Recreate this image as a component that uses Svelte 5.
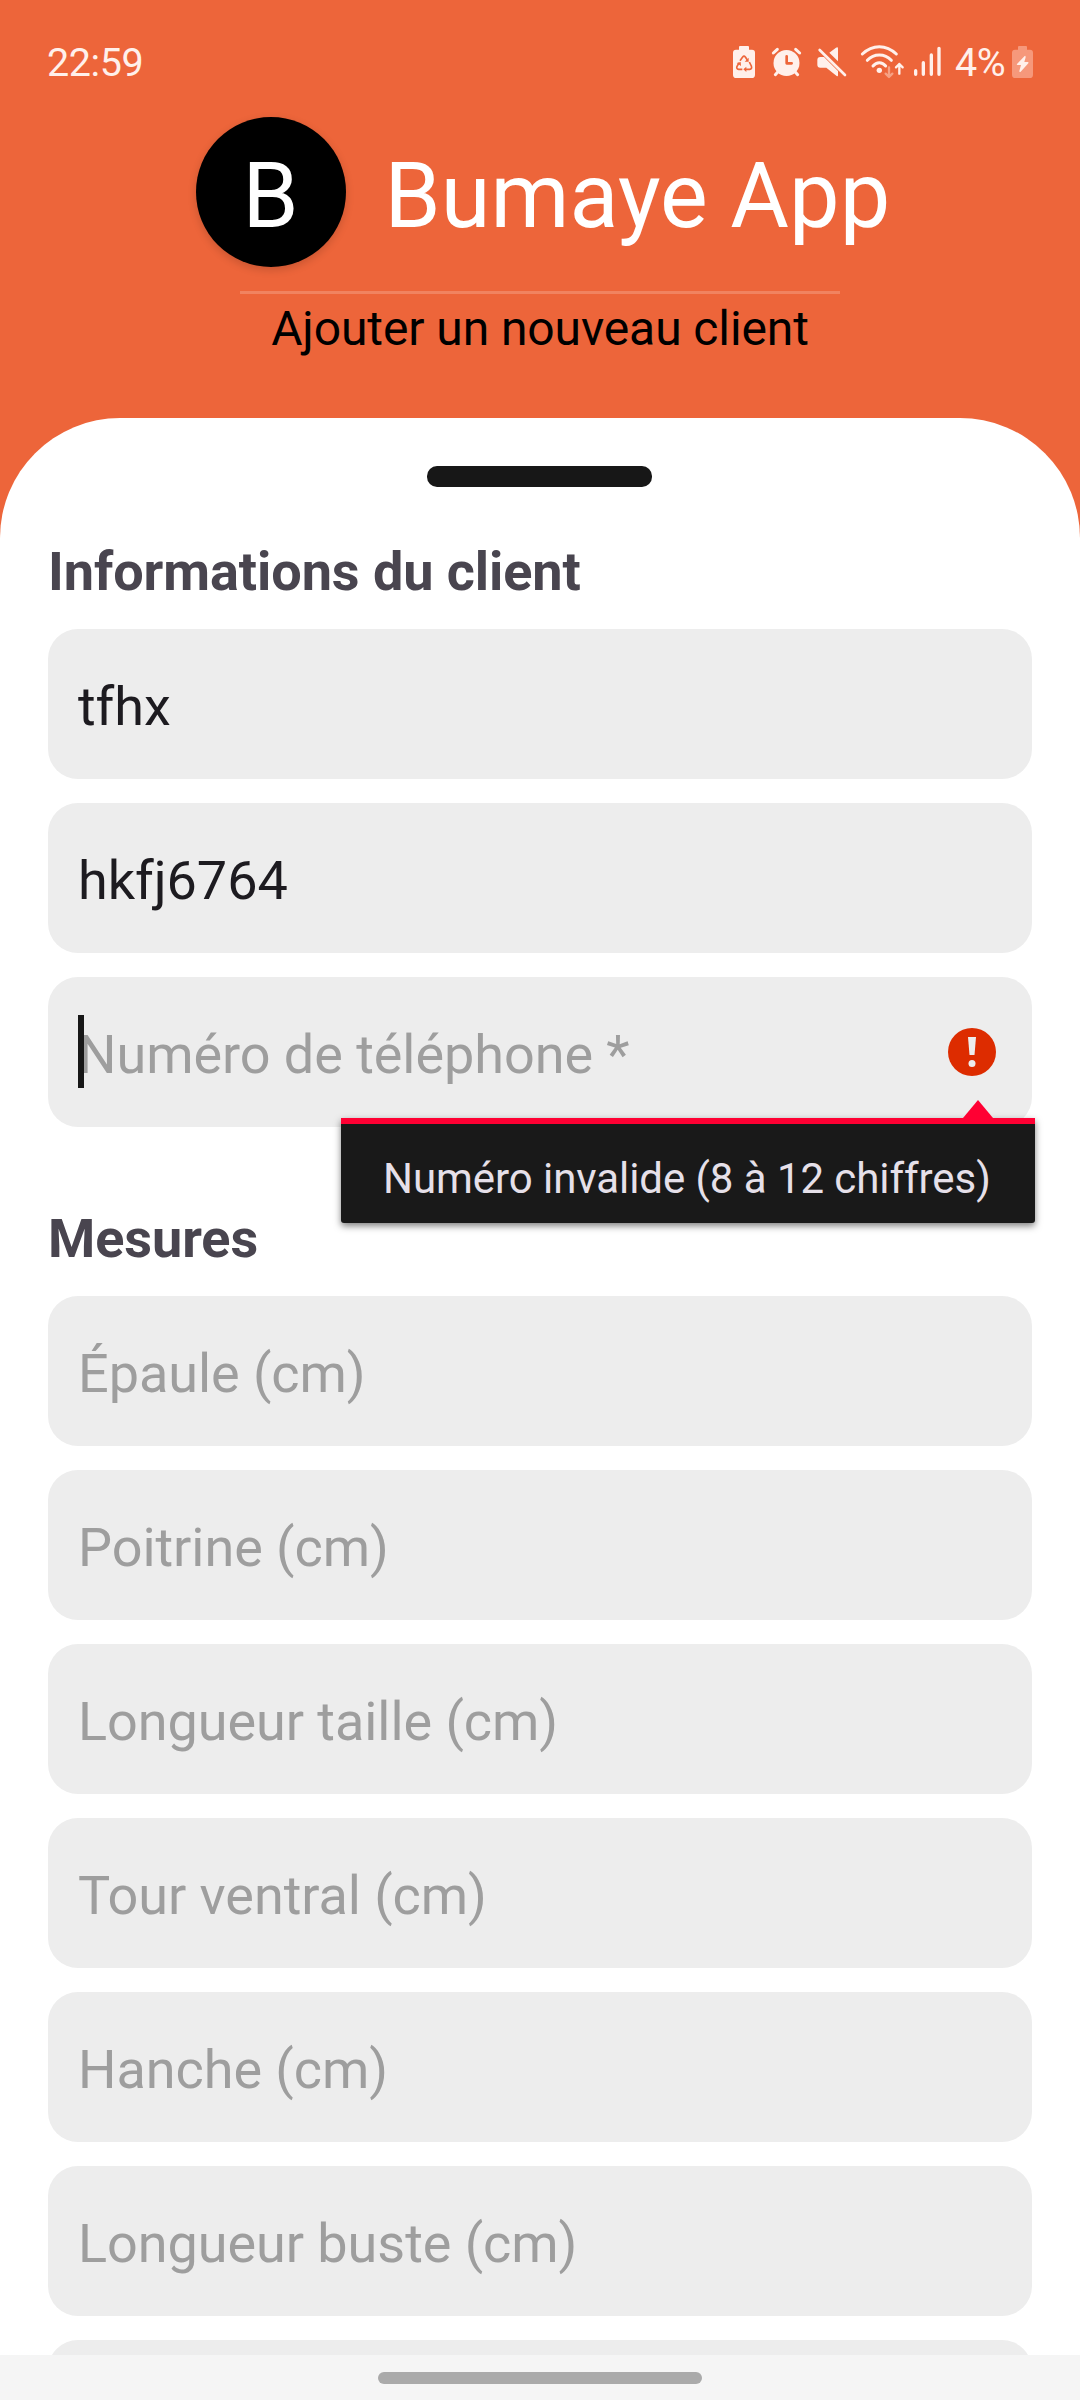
<script>
  const client = [
    { label: 'Nom', value: 'tfhx' },
    { label: 'Adresse', value: 'hkfj6764' },
    { label: 'Numéro de téléphone *', value: '', focused: true, error: 'Numéro invalide (8 à 12 chiffres)' }
  ];
  const measures = [
    'Épaule (cm)',
    'Poitrine (cm)',
    'Longueur taille (cm)',
    'Tour ventral (cm)',
    'Hanche (cm)',
    'Longueur buste (cm)',
    ''
  ];
</script>

<div class="screen">
  <div class="status">
    <span class="time">22:59</span>
    <div class="indicators">
      <svg class="saver" width="24" height="34" viewBox="96 75 72 102">
        <path fill="currentColor" d="M120 78h24q3 0 3 3v8h9q9 0 9 9v66q0 10-10 10h-46q-10 0-10-10V98q0-9 9-9h9v-8q0-3 3-3z" />
        <g fill="none" stroke="#ed653a" stroke-width="5" stroke-linejoin="round">
          <path d="M120 122l8-11q4-5 8 0l6 9" />
          <path d="M148 126l6 12q3 9-5 10h-13" />
          <path d="M127 148h-11q-8-1-5-9l6-10" />
        </g>
        <path fill="#ed653a" d="M146 113v12h-12zM139 140v16l-9-8zM110 129l12-3 1 12z" />
      </svg>
      <svg class="alarm" width="31" height="34" viewBox="213 75 93 102">
        <circle cx="259.500" cy="129" r="39" fill="currentColor" />
        <g fill="none" stroke="currentColor" stroke-width="9" stroke-linecap="round">
          <path d="M220 99l12-11M299 99l-12-11M226 164l8-9M293 164l-8-9" />
        </g>
        <path fill="none" stroke="#ed653a" stroke-width="8" stroke-linecap="round" stroke-linejoin="round" d="M260 109v21h15" />
      </svg>
      <svg class="mute" width="31" height="34" viewBox="348 75 93 102">
        <path fill="currentColor" d="M361 111h11l42 42v13q0 4-4 2l-31-25h-18q-9 0-9-9v-14q0-9 9-9zM388 98l20-15q6-4 6 3v38z" />
        <path stroke="currentColor" stroke-width="8" stroke-linecap="round" d="M359 90l76 75" />
      </svg>
      <svg class="wifi" width="45" height="34" viewBox="480 75 135 102">
        <g fill="none" stroke="currentColor" stroke-width="9" stroke-linecap="round">
          <path d="M487 102q23-22 51-22t51 22" />
          <path d="M502 121q15-16 36-16t36 16" />
          <path d="M519 138q8-10 19-10t19 10" />
        </g>
        <circle cx="538" cy="151" r="8" fill="currentColor" />
        <path fill="none" stroke="currentColor" stroke-width="7" stroke-linecap="round" stroke-linejoin="round" d="M598 161v-29M588 142l10-10 10 10" />
        <path fill="none" stroke="#f6a184" stroke-width="7" stroke-linecap="round" stroke-linejoin="round" d="M567 142v29M557 161l10 10 10-10" />
      </svg>
      <svg class="signal" width="29" height="34" viewBox="639 75 87 102">
        <path fill="none" stroke="currentColor" stroke-width="10" stroke-linecap="round" d="M647 152v11M670 128v35M694 105v58M717 85v78" />
      </svg>
      <span class="percent">4%</span>
      <svg class="battery" width="23" height="34" viewBox="933 75 69 102">
        <path fill="#f6987b" d="M956 78h22q3 0 3 3v8h9q9 0 9 9v66q0 10-10 10h-43q-10 0-10-10V98q0-9 9-9h9v-8q0-3 3-3z" />
        <path fill="currentColor" d="M974 108l-23 24q-2 3 2 3h10l-5 18q0 5 4 2l23-25q2-4-2-4h-10l4-14q0-6-3-4z" />
      </svg>
    </div>
  </div>

  <header>
    <div class="brand">
      <div class="logo"><span>B</span></div>
      <h1>Bumaye App</h1>
    </div>
    <div class="rule"></div>
    <p>Ajouter un nouveau client</p>
  </header>

  <main>
    <div class="handle"></div>
    <h2>Informations du client</h2>
    <div class="fields">
      {#each client as field}
        <div class="field" class:filled={field.value}>
          {#if field.focused}<i class="caret"></i>{/if}
          <span>{field.value || field.label}</span>
          {#if field.error}
            <svg class="alert" width="48" height="48" viewBox="0 0 48 48">
              <circle cx="24" cy="24" r="24" fill="#dd2c00" />
              <path fill="#ededed" d="M20 9h8l-1.500 18h-5z" />
              <circle cx="24" cy="35.500" r="3.500" fill="#ededed" />
            </svg>
            <div class="popup">
              <svg class="arrow" width="30" height="18" viewBox="0 0 30 18"><path fill="#ff0033" d="M15 0l15 18H0z" /></svg>
              {field.error}
            </div>
          {/if}
        </div>
      {/each}
    </div>
    <h2 class="second">Mesures</h2>
    <div class="fields">
      {#each measures as label}
        <div class="field"><span>{label}</span></div>
      {/each}
    </div>
  </main>

  <nav><div class="pill"></div></nav>
</div>

<style>
  :global(body) {
    margin: 0;
  }
  .screen {
    width: 1080px;
    height: 2400px;
    display: flex;
    flex-direction: column;
    overflow: hidden;
    background: #ed653a;
    font-family: Roboto, sans-serif;
  }
  .status {
    box-sizing: border-box;
    flex: none;
    height: 117px;
    padding: 38px 46px 0 47px;
    display: flex;
    justify-content: space-between;
    align-items: flex-start;
    color: #fff0eb;
    font-size: 39.500px;
    line-height: 50px;
  }
  .time {
    letter-spacing: -0.4px;
  }
  .indicators {
    display: flex;
    align-items: flex-start;
  }
  .indicators svg {
    display: block;
    margin-top: 7px;
  }
  .alarm { margin-left: 15px; }
  .mute { margin-left: 14px; }
  .wifi { margin-left: 13px; }
  .signal { margin-left: 8px; }
  .percent {
    width: 51px;
    margin: 0 5px 0 13px;
    letter-spacing: -0.4px;
    white-space: nowrap;
  }
  header {
    flex: none;
    height: 301px;
    display: flex;
    flex-direction: column;
    align-items: center;
  }
  .brand {
    display: flex;
    align-items: center;
    gap: 39px;
    height: 150px;
    padding-left: 6px;
    color: #fff;
    font-size: 90px;
    line-height: 106px;
  }
  .logo {
    width: 150px;
    height: 150px;
    border-radius: 50%;
    background: #000;
    box-shadow: 0 3px 8px rgba(0, 0, 0, 0.16);
    text-align: center;
  }
  .logo span {
    display: block;
    padding-top: 27px;
  }
  h1 {
    margin: 0;
    padding-top: 10px;
    font: inherit;
    letter-spacing: 0.1px;
    white-space: nowrap;
  }
  .rule {
    width: 600px;
    height: 3px;
    margin-top: 24px;
    background: #f18360;
  }
  header p {
    margin: 7px 0 0;
    color: #000;
    font-size: 48px;
    letter-spacing: -0.1px;
    line-height: 56px;
  }
  main {
    flex: 1;
    min-height: 0;
    overflow: hidden;
    padding: 48px 48px 0;
    border-radius: 120px 120px 0 0;
    background: #fff;
  }
  .handle {
    width: 225px;
    height: 21px;
    margin: 0 auto 53px 379px;
    border-radius: 10px;
    background: #171717;
  }
  h2 {
    margin: 0;
    height: 89px;
    color: #49454f;
    font-size: 54px;
    font-weight: 700;
    letter-spacing: -0.07px;
    line-height: 64px;
  }
  .second {
    margin-top: 80px;
  }
  .fields {
    display: flex;
    flex-direction: column;
    gap: 24px;
  }
  .field {
    position: relative;
    box-sizing: border-box;
    flex: none;
    height: 150px;
    padding: 5px 36px 0 30px;
    display: flex;
    align-items: center;
    border-radius: 30px;
    background: #ededed;
    color: #9e9e9e;
    font-size: 54px;
    letter-spacing: -0.06px;
    line-height: 64px;
    white-space: nowrap;
  }
  .filled {
    color: #1d1b20;
  }
  .caret {
    position: absolute;
    left: 30px;
    top: 38px;
    width: 6px;
    height: 73px;
    background: #171717;
  }
  .alert {
    margin: 0 0 5px auto;
  }
  .popup {
    position: absolute;
    z-index: 1;
    right: -3px;
    top: 141px;
    box-sizing: border-box;
    width: 694px;
    height: 105px;
    padding: 30px 0 0 42px;
    border-top: 6px solid #ff0033;
    border-radius: 0 0 3px 3px;
    background: #191919;
    box-shadow: 0 3px 7px rgba(0, 0, 0, 0.5);
    color: #e6e0e9;
    font-size: 42px;
    line-height: 50px;
  }
  .arrow {
    position: absolute;
    right: 42px;
    top: -24px;
  }
  nav {
    flex: none;
    height: 28px;
    padding-top: 17px;
    background: #f5f5f5;
  }
  .pill {
    width: 324px;
    height: 12px;
    margin: 0 auto;
    border-radius: 6px;
    background: #aaa;
  }
</style>
